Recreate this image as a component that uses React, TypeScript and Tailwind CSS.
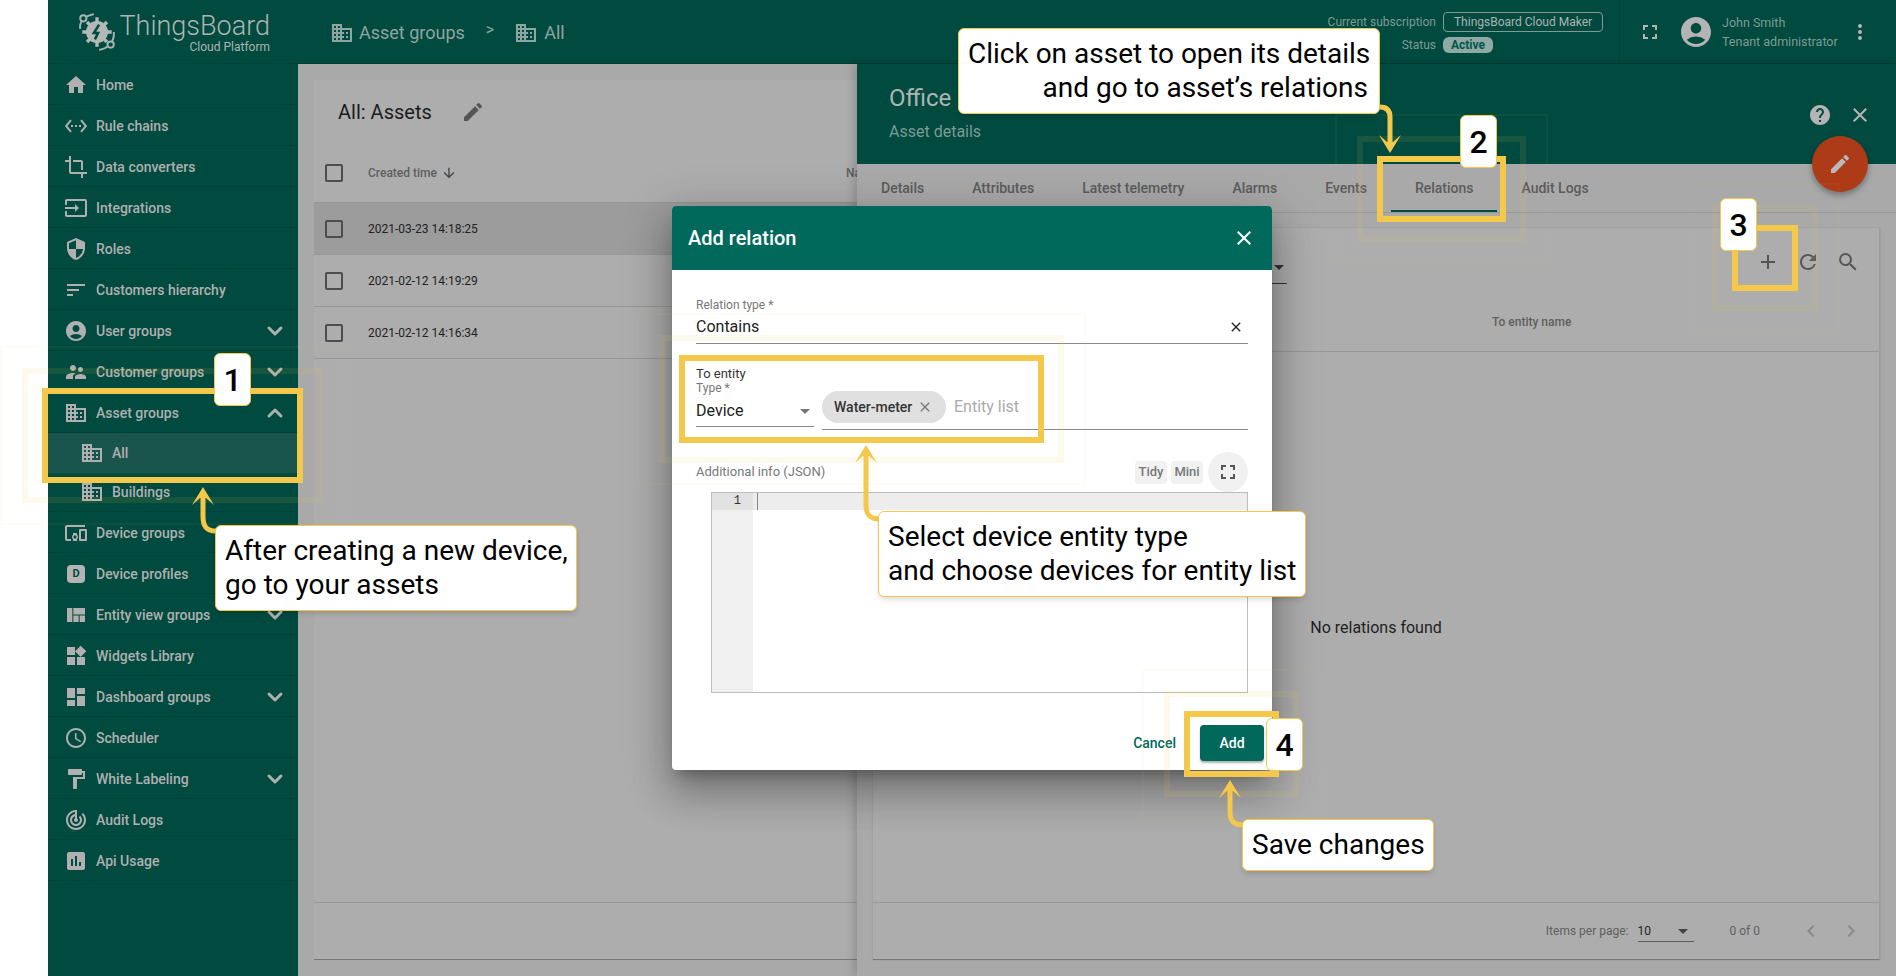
import React from 'react';
import { ChevronDown, ChevronUp } from 'lucide-react';
import {
  MdAccountCircle,
  MdAdd,
  MdArrowDownward,
  MdArrowDropDown,
  MdCheckBoxOutlineBlank,
  MdChevronLeft,
  MdChevronRight,
  MdClose,
  MdCrop,
  MdDashboard,
  MdDevicesOther,
  MdDomain,
  MdEdit,
  MdFormatPaint,
  MdFullscreen,
  MdHelp,
  MdHome,
  MdInput,
  MdInsertChart,
  MdMoreVert,
  MdRefresh,
  MdSchedule,
  MdSearch,
  MdSecurity,
  MdSettingsEthernet,
  MdSort,
  MdSupervisorAccount,
  MdTrackChanges,
  MdViewQuilt,
  MdWidgets,
} from 'react-icons/md';

const DeviceProfileIcon = () => (
  <span className="flex h-[18px] w-[18px] items-center justify-center rounded-sm bg-[#b4b4b4] text-[11px] font-bold text-[#004a3f]">
    D
  </span>
);

const menu = [
  { label: 'Home', icon: <MdHome size={24} /> },
  { label: 'Rule chains', icon: <MdSettingsEthernet size={24} /> },
  { label: 'Data converters', icon: <MdCrop size={24} /> },
  { label: 'Integrations', icon: <MdInput size={24} /> },
  { label: 'Roles', icon: <MdSecurity size={24} /> },
  { label: 'Customers hierarchy', icon: <MdSort size={24} /> },
  { label: 'User groups', icon: <MdAccountCircle size={24} />, more: true },
  { label: 'Customer groups', icon: <MdSupervisorAccount size={24} />, more: true },
  { label: 'Asset groups', icon: <MdDomain size={24} />, open: true },
  { label: 'Device groups', icon: <MdDevicesOther size={24} /> },
  { label: 'Device profiles', icon: <DeviceProfileIcon /> },
  { label: 'Entity view groups', icon: <MdViewQuilt size={24} />, more: true },
  { label: 'Widgets Library', icon: <MdWidgets size={24} /> },
  { label: 'Dashboard groups', icon: <MdDashboard size={24} />, more: true },
  { label: 'Scheduler', icon: <MdSchedule size={24} /> },
  { label: 'White Labeling', icon: <MdFormatPaint size={24} />, more: true },
  { label: 'Audit Logs', icon: <MdTrackChanges size={24} /> },
  { label: 'Api Usage', icon: <MdInsertChart size={24} /> },
];

const tabs = ['Details', 'Attributes', 'Latest telemetry', 'Alarms', 'Events', 'Relations', 'Audit Logs'];
const rows = ['2021-03-23 14:18:25', '2021-02-12 14:19:29', '2021-02-12 14:16:34'];

const Logo = () => (
  <svg width="42" height="42" viewBox="0 0 40 40" fill="none" className="shrink-0">
    <path d="M4 17C3 11 7 5 17 3" stroke="#aeb4b2" strokeWidth="1.8" />
    <circle cx="7" cy="7" r="3" fill="#004a3f" stroke="#aeb4b2" strokeWidth="1.8" />
    <path d="M36 20C37 30 30 36 22 37" stroke="#aeb4b2" strokeWidth="1.8" />
    <circle cx="33" cy="32" r="3" fill="#004a3f" stroke="#aeb4b2" strokeWidth="1.8" />
    <circle cx="20" cy="20" r="10.5" fill="#b4b8b6" />
    <g stroke="#b4b8b6" strokeWidth="3.2">
      <path d="M20 6V34M6 20H34M10.5 10.5L29.5 29.5M29.5 10.5L10.5 29.5" />
    </g>
    <path d="M22 13L17 21H21L18 27" stroke="#004a3f" strokeWidth="2.4" />
  </svg>
);

const Frame = ({ className, children }: { className: string; children?: React.ReactNode }) => (
  <div className={`absolute border-[6px] border-[#f4c84a] ${className}`}>
    <div className="absolute -inset-[26px] border-[6px] border-[#f4c84a]/10" />
    <div className="absolute -inset-[48px] border-2 border-[#f4c84a]/5" />
    {children}
  </div>
);

const Badge = ({ className, children }: { className: string; children: React.ReactNode }) => (
  <div
    className={`absolute flex items-center justify-center rounded-md border border-[#f4c84a] bg-white text-[32px] font-medium text-black ${className}`}
  >
    {children}
  </div>
);

const Callout = ({ className, children }: { className: string; children: React.ReactNode }) => (
  <div
    className={`absolute rounded-md border border-[#f4c84a] bg-white py-2 pr-[11px] pl-[9px] text-[28px] leading-[34px] whitespace-nowrap text-black shadow-md ${className}`}
  >
    {children}
  </div>
);

const SideBar = () => (
  <aside className="w-[250px] shrink-0 bg-[#004a3f] text-[#b0b0b0]">
    <div className="flex h-16 items-center border-b border-black/10 pl-[28px]">
      <Logo />
      <div className="ml-[4px] flex w-[148px] flex-col items-end pt-px">
        <span className="text-[27px] leading-[30px] font-light text-[#aeb4b2]">ThingsBoard</span>
        <span className="text-xs leading-[12px] text-[#aeb4b2]">Cloud Platform</span>
      </div>
    </div>
    <nav className="flex flex-col">
      {menu.map((item) => (
        <React.Fragment key={item.label}>
          <div className="flex h-[41px] items-center border-b border-black/10 pt-px pr-[11px] pl-4 text-sm font-medium">
            <span className="flex w-6 justify-center">{item.icon}</span>
            <span className="ml-2">{item.label}</span>
            {item.more && <ChevronDown size={24} strokeWidth={3} className="ml-auto" />}
            {item.open && <ChevronUp size={24} strokeWidth={3} className="ml-auto" />}
          </div>
          {item.open && (
            <>
              <div className="flex h-10 items-center bg-[#1a554d] pl-[32px] text-sm font-medium">
                <MdDomain size={24} />
                <span className="ml-2">All</span>
              </div>
              <div className="flex h-[39px] items-center border-b border-black/10 pl-[32px] text-sm font-medium">
                <MdDomain size={24} />
                <span className="ml-2">Buildings</span>
              </div>
            </>
          )}
        </React.Fragment>
      ))}
    </nav>
  </aside>
);

const TopBar = () => (
  <header className="flex h-16 shrink-0 items-center border-b border-black/20 bg-[#004a3f] pl-[32px] text-[#8fa5a0]">
    <span className="flex items-center pt-[2px]">
      <MdDomain size={24} />
      <span className="ml-[5px] text-[18px]">Asset groups</span>
    </span>
    <span className="mb-[4px] ml-[21px] text-[16px]">&gt;</span>
    <span className="ml-[20px] flex items-center pt-[2px]">
      <MdDomain size={24} />
      <span className="ml-[6px] text-[18px]">All</span>
    </span>
    <div className="ml-auto grid grid-cols-[auto_auto] items-center gap-x-[7px] gap-y-[5px] pt-[2px] pr-4 text-xs">
      <span className="text-right text-[#7f9a95]">Current subscription</span>
      <span className="flex h-5 w-40 items-center justify-center rounded border border-[#7f9a95] text-[#aeb4b2]">
        ThingsBoard Cloud Maker
      </span>
      <span className="text-right text-[#7f9a95]">Status</span>
      <span className="flex h-4 w-[50px] items-center justify-center rounded-md bg-[#8fa9a4] font-bold text-[#00574b]">
        Active
      </span>
    </div>
    <div className="flex h-full items-center border-l border-black/10 pr-6 pl-[18px]">
      <MdFullscreen size={24} className="text-[#b4b4b4]" />
      <MdAccountCircle size={36} className="ml-4 text-[#b4b4b4]" />
      <div className="ml-2 flex w-[118px] flex-col gap-[4px] text-[12.5px] leading-[15px] text-[#7f9a95]">
        <span>John Smith</span>
        <span className="whitespace-nowrap">Tenant administrator</span>
      </div>
      <MdMoreVert size={24} className="ml-2 text-[#b4b4b4]" />
    </div>
  </header>
);

const AssetsCard = () => (
  <div className="w-[559px] shrink-0 overflow-hidden py-4 pl-4">
    <div className="flex h-full w-[600px] flex-col border-b border-[#777] bg-[#adadad] text-xs">
      <div className="flex h-16 shrink-0 items-center pl-6">
        <span className="text-xl text-[#1c1c1c]">All: Assets</span>
        <MdEdit size={24} className="ml-[29px] text-[#555]" />
      </div>
      <div className="flex h-[59px] shrink-0 items-center border-b border-[#979797] pl-2 font-medium text-[#5f5f5f]">
        <MdCheckBoxOutlineBlank size={24} className="text-[#4d4d4d]" />
        <span className="ml-[22px] flex w-[478px] items-center">
          Created time
          <MdArrowDownward size={16} className="ml-1 text-[#444]" />
        </span>
        <span>Name</span>
      </div>
      {rows.map((time, i) => (
        <div
          key={time}
          className={`flex h-[52px] shrink-0 items-center border-b border-[#979797] pl-2 text-[#222] ${
            i === 0 ? 'bg-[#9c9c9c]' : ''
          }`}
        >
          <MdCheckBoxOutlineBlank size={24} className="text-[#4d4d4d]" />
          <span className="ml-[22px]">{time}</span>
        </div>
      ))}
      <div className="mt-auto h-[57px] shrink-0 border-t border-[#979797]" />
    </div>
  </div>
);

const DetailsPanel = () => (
  <section className="flex min-w-0 flex-1 flex-col bg-[#a9a9a9] shadow-[-4px_0_8px_rgba(0,0,0,0.15)]">
    <div className="flex h-[100px] shrink-0 items-start justify-between bg-[#004a3f] pl-[32px]">
      <div className="pt-[20px]">
        <div className="text-2xl leading-[28px] text-[#aeb4b2]">Office</div>
        <div className="mt-[10px] leading-5 text-[#7f9a95]">Asset details</div>
      </div>
      <div className="mt-[39px] flex items-center gap-4 pr-6 text-[#b4b4b4]">
        <MdHelp size={24} />
        <MdClose size={24} />
      </div>
    </div>
    <div className="flex h-[49px] shrink-0 border-b border-[#979797] text-sm font-medium text-[#5c5c5c]">
      {tabs.map((tab) => (
        <div key={tab} className="relative flex h-[48px] items-center px-6">
          {tab}
          {tab === 'Relations' && <span className="absolute inset-x-0 bottom-0 h-0.5 bg-[#004a3f]" />}
        </div>
      ))}
    </div>
    <div className="flex min-h-0 flex-1 flex-col p-4 pt-[15px]">
      <div className="flex h-full flex-col border-r border-b border-[#9c9c9c] border-b-[#777] bg-[#adadad] shadow-[0_0_2px_rgba(0,0,0,0.15)]">
        <div className="flex h-[68px] shrink-0 items-center justify-end pr-[19px] text-[#555]">
          <div className="mr-auto mb-[12px] ml-[240px] flex w-[174px] justify-end self-end border-b border-[#333] pb-1">
            <MdArrowDropDown size={24} className="-mr-1 text-[#333]" />
          </div>
          <div className="flex items-center gap-4">
            <MdAdd size={24} />
            <MdRefresh size={24} />
            <MdSearch size={24} />
          </div>
        </div>
        <div className="flex h-[56px] shrink-0 items-center border-b border-[#979797] pb-1 pl-[619px] text-xs font-medium text-[#5f5f5f]">
          To entity name
        </div>
        <div className="flex flex-1 items-center justify-center pt-[2px] text-[#1f1f1f]">No relations found</div>
        <div className="flex h-[57px] shrink-0 items-center justify-end border-t border-[#979797] pr-4 text-xs text-[#5f5f5f]">
          <span>Items per page:</span>
          <div className="mr-9 ml-[9px] flex h-[22px] w-14 items-center justify-between border-b border-[#5f5f5f] text-[#222]">
            <span>10</span>
            <MdArrowDropDown size={24} className="-mr-[1px] text-[#444]" />
          </div>
          <span className="mr-[39px]">0 of 0</span>
          <div className="flex gap-4 text-[#8a8a8a]">
            <MdChevronLeft size={24} />
            <MdChevronRight size={24} />
          </div>
        </div>
      </div>
    </div>
  </section>
);

const AddRelationDialog = () => (
  <div className="absolute top-[206px] left-[672px] flex h-[564px] w-[600px] flex-col overflow-hidden rounded bg-white shadow-[0_11px_15px_-7px_rgba(0,0,0,0.3),0_24px_38px_3px_rgba(0,0,0,0.2),0_9px_46px_8px_rgba(0,0,0,0.15)]">
    <div className="flex h-16 shrink-0 items-center justify-between bg-[#00695c] pr-4 pl-4 text-white">
      <span className="text-xl font-medium">Add relation</span>
      <MdClose size={24} />
    </div>
    <div className="px-6 pt-[27px]">
      <div className="h-4 text-xs leading-4 text-[#777]">Relation type *</div>
      <div className="mt-[2px] flex items-center justify-between border-b border-[#8a8a8a] pb-1 text-[#222]">
        <span className="leading-6">Contains</span>
        <MdClose size={16} className="mr-[4px]" />
      </div>
      <div className="mt-[22px] h-[14px] text-[13px] leading-4 text-[#333]">To entity</div>
      <div className="flex items-end gap-2">
        <div className="mb-[3px] w-[118px] shrink-0">
          <div className="h-4 text-xs leading-4 text-[#777]">Type *</div>
          <div className="mt-[3px] flex h-7 items-start justify-between border-b border-[#8a8a8a] text-[#222]">
            <span className="leading-6">Device</span>
            <MdArrowDropDown size={24} className="-mr-[3px] text-[#777]" />
          </div>
        </div>
        <div className="flex flex-1 items-center border-b border-[#8a8a8a] pb-[6px]">
          <div className="flex h-8 w-[124px] items-center rounded-2xl bg-[#e0e0e0] pl-3 text-sm font-medium text-[#333]">
            Water-meter
            <MdClose size={16} className="ml-[5px] text-[#777]" />
          </div>
          <span className="ml-2 text-[#aaa]">Entity list</span>
        </div>
      </div>
      <div className="mt-[21px] flex h-[41px] items-center pt-[1px] text-[13px] text-[#777]">
        <span>Additional info (JSON)</span>
        <span className="ml-auto flex h-[23px] w-8 items-center justify-center rounded bg-[#f1f1f1] font-medium">Tidy</span>
        <span className="ml-1 flex h-[23px] w-8 items-center justify-center rounded bg-[#f1f1f1] font-medium">Mini</span>
        <span className="ml-[5px] flex h-10 w-10 items-center justify-center rounded-full bg-[#f0f0f0]">
          <MdFullscreen size={24} className="text-[#555]" />
        </span>
      </div>
      <div className="ml-[15px] flex h-[201px] border border-[#bdbdbd] font-['Liberation_Mono',monospace] text-xs">
        <div className="w-[41px] shrink-0 bg-[#f0f0f0]">
          <div className="h-[17px] bg-[#e2e2e2] pr-[12px] text-right leading-[17px] text-[#333]">1</div>
        </div>
        <div className="flex-1">
          <div className="h-[17px] bg-[#ededed] pl-1">
            <div className="h-[17px] w-px bg-[#888]" />
          </div>
        </div>
      </div>
    </div>
    <div className="flex items-center justify-end pt-[32px] pr-2 text-sm font-medium">
      <span className="mr-6 text-[#00695c]">Cancel</span>
      <span className="flex h-9 w-16 items-center justify-center rounded bg-[#00695c] text-white shadow-[0_2px_2px_rgba(0,0,0,0.3)]">
        Add
      </span>
    </div>
  </div>
);

const Arrows = () => (
  <svg width="1896" height="976" viewBox="0 0 1896 976" fill="none" className="pointer-events-none absolute top-0 left-0">
    <g stroke="#f4c84a" strokeWidth="5">
      <path d="M216 531C206 531 203 526 203 516V496" />
      <path d="M1380 107C1386 107 1390 110 1390 117V143" />
      <path d="M880 519C870 519 866 515 866 505V455" />
      <path d="M1243 825C1234 825 1230 821 1230 812V790" />
    </g>
    <g fill="#f4c84a">
      <path d="M203 487L214 505L206 498H200L192 505Z" />
      <path d="M1390 153L1379 135L1387 142H1393L1401 135Z" />
      <path d="M866 445L877 463L869 456H863L855 463Z" />
      <path d="M1230 780L1241 798L1233 791H1227L1219 798Z" />
    </g>
  </svg>
);

const App: React.FC = () => {
  return (
    <div className="relative flex h-[976px] w-[1896px] overflow-hidden bg-white pl-12 font-[Roboto,sans-serif]">
      <SideBar />
      <div className="flex min-w-0 flex-1 flex-col bg-[#a9a9a9]">
        <TopBar />
        <div className="flex min-h-0 flex-1">
          <AssetsCard />
          <DetailsPanel />
        </div>
      </div>

      <div className="absolute top-[136px] left-[1812px] flex h-14 w-14 items-center justify-center rounded-full bg-[#ad3b17] text-[#b9b9b9] shadow-[0_3px_6px_rgba(0,0,0,0.35)]">
        <MdEdit size={24} />
      </div>

      <AddRelationDialog />

      <Frame className="top-[388px] left-[42px] h-[95px] w-[261px]" />
      <Frame className="top-[156px] left-[1377px] h-[66px] w-[129px]" />
      <Frame className="top-[225px] left-[1732px] h-[66px] w-[66px]" />
      <Frame className="top-[355px] left-[679px] h-[88px] w-[365px]" />
      <Frame className="top-[711px] left-[1184px] h-[66px] w-[95px]" />

      <Arrows />

      <Badge className="top-[353px] left-[214px] h-[53px] w-[37px]">1</Badge>
      <Badge className="top-[115px] left-[1460px] h-[53px] w-[37px]">2</Badge>
      <Badge className="top-[198px] left-[1720px] h-[53px] w-[37px]">3</Badge>
      <Badge className="top-[718px] left-[1266px] h-[53px] w-[37px]">4</Badge>

      <Callout className="top-[525px] left-[215px] w-[362px]">
        After creating a new device,
        <br />
        go to your assets
      </Callout>
      <Callout className="top-[28px] left-[958px] w-[422px] text-right">
        Click on asset to open its details
        <br />
        and go to asset’s relations
      </Callout>
      <Callout className="top-[511px] left-[878px] w-[428px]">
        Select device entity type
        <br />
        and choose devices for entity list
      </Callout>
      <Callout className="top-[819px] left-[1242px] w-[192px]">Save changes</Callout>
    </div>
  );
};

export default App;
